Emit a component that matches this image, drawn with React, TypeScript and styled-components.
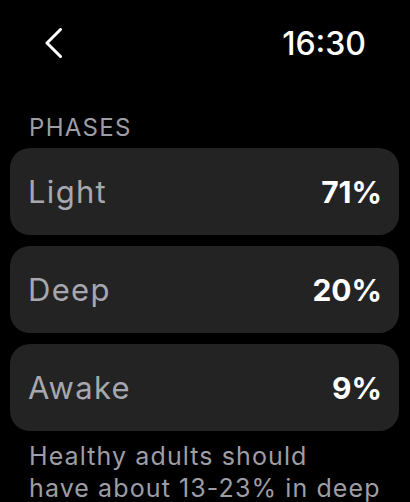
import React from "react";
import styled, { createGlobalStyle } from "styled-components";

const Global = createGlobalStyle`
  html, body { margin: 0; padding: 0; background: #000; }
  body { font-family: Inter, "Noto Sans", sans-serif; -webkit-font-smoothing: antialiased; }
`;

const Screen = styled.div`
  width: 410px;
  height: 502px;
  overflow: hidden;
  background: #000;
  display: flex;
  flex-direction: column;
  padding: 0 10px 0 10px;
  box-sizing: border-box;
`;

const Header = styled.header`
  display: flex;
  align-items: center;
  justify-content: space-between;
  height: 32px;
  margin-top: 27px;
  padding: 0 34px 0 34px;
`;

const BackButton = styled.button`
  background: none;
  border: 0;
  padding: 0;
  display: flex;
  cursor: pointer;
`;

const Time = styled.div`
  color: #fff;
  font-size: 32px;
  line-height: 32px;
  font-weight: 500;
  padding-top: 2px;
`;

const SectionTitle = styled.div`
  color: #9d9ea5;
  font-size: 24px;
  line-height: 24px;
  letter-spacing: 1.3px;
  margin: 57px 0 8px 19px;
`;

const List = styled.div`
  display: flex;
  flex-direction: column;
  gap: 11px;
`;

const Card = styled.div`
  height: 87px;
  border-radius: 20px;
  background: #232323;
  display: flex;
  align-items: center;
  justify-content: space-between;
  padding: 0 17px 0 18px;
  width: 389px;
  box-sizing: border-box;
`;

const Label = styled.span`
  color: #a7a8af;
  font-size: 31px;
  font-weight: 400;
  letter-spacing: 1.3px;
`;

const Value = styled.span`
  color: #fff;
  font-size: 30px;
  font-weight: 700;
`;

const Note = styled.p`
  margin: 9px 0 0 19px;
  color: #9d9ea5;
  font-size: 25px;
  line-height: 32px;
  letter-spacing: 1.1px;
  white-space: nowrap;
`;

const phases = [
  { name: "Light", pct: 71 },
  { name: "Deep", pct: 20 },
  { name: "Awake", pct: 9 },
];

export default function App() {
  return (
    <>
      <Global />
      <Screen>
        <Header>
          <BackButton aria-label="Back">
            <svg width="20" height="30" viewBox="0 0 20 30">
              <path d="M16.5 1.5 L3 15 L16.5 28.5" fill="none" stroke="#fff" strokeWidth="3" strokeLinecap="round" strokeLinejoin="round" />
            </svg>
          </BackButton>
          <Time>16:30</Time>
        </Header>
        <SectionTitle>PHASES</SectionTitle>
        <List>
          {phases.map((p) => (
            <Card key={p.name}>
              <Label>{p.name}</Label>
              <Value>{p.pct}%</Value>
            </Card>
          ))}
        </List>
        <Note>
          Healthy adults should
          <br />
          have about 13-23% in deep
        </Note>
      </Screen>
    </>
  );
}
